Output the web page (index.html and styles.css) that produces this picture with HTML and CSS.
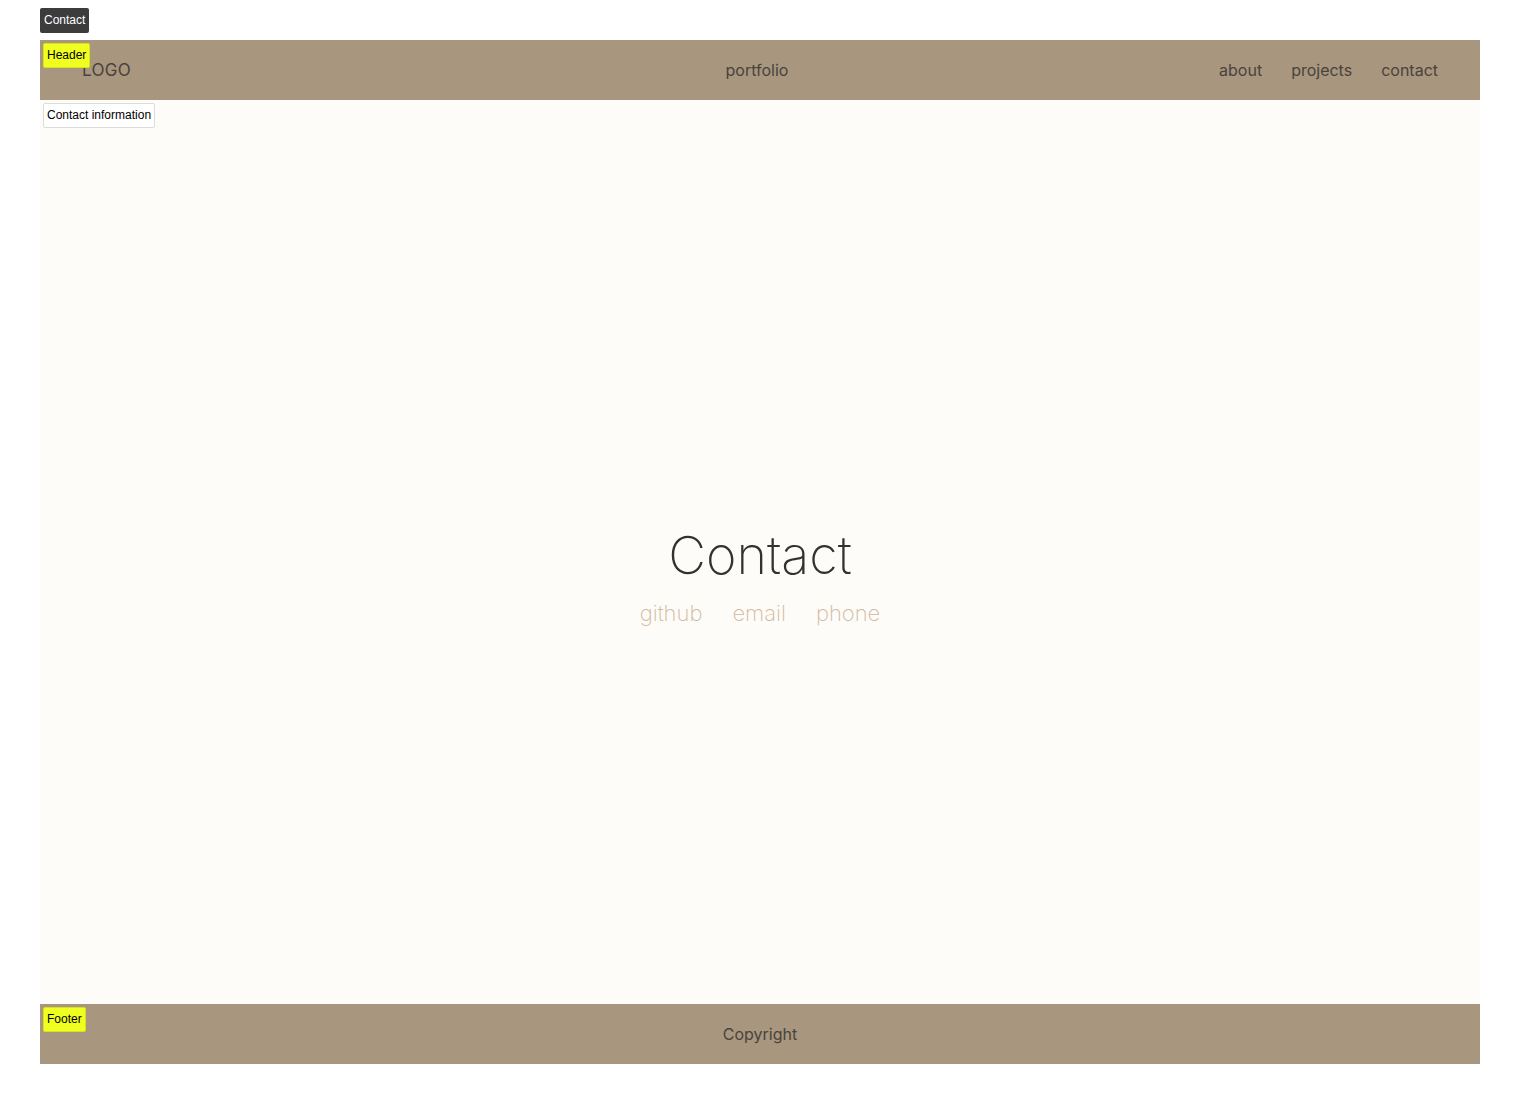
FILE: index.html
```html
<!DOCTYPE html>
<html lang="en">
<head>
<meta charset="utf-8">
<title>Contact</title>
<link rel="stylesheet" href="styles.css">
</head>
<body>
<div class="page">
  <div class="frame-tag">Contact</div>
  <div class="frame">
    <header class="header">
      <span class="tag tag-yellow tag-header">Header</span>
      <div class="logo">LOGO</div>
      <div class="brand">portfolio</div>
      <nav class="nav">
        <a href="#">about</a>
        <a href="#">projects</a>
        <a href="#">contact</a>
      </nav>
    </header>
    <main class="main">
      <span class="tag tag-white tag-info">Contact information</span>
      <div class="contact">
        <h1 class="title">Contact</h1>
        <div class="links">
          <a href="#">github</a>
          <a href="#">email</a>
          <a href="#">phone</a>
        </div>
      </div>
    </main>
    <footer class="footer">
      <span class="tag tag-yellow tag-footer">Footer</span>
      <div class="copyright">Copyright</div>
    </footer>
  </div>
</div>
</body>
</html>
```

FILE: styles.css
```css
* { box-sizing: border-box; }
html, body { margin: 0; padding: 0; background: #ffffff; }
body { font-family: Inter, "Noto Sans", sans-serif; }

.page { padding: 8px 40px 40px; }

.frame-tag {
  display: inline-block;
  height: 25px;
  line-height: 25px;
  padding: 0 4px;
  background: #3c3c3c;
  color: #ffffff;
  border-radius: 2px;
  font-family: "Liberation Sans", Arial, sans-serif;
  font-size: 12px;
}

.frame {
  margin-top: 7px;
  width: 1440px;
  display: flex;
  flex-direction: column;
}

.tag {
  position: absolute;
  left: 3px;
  top: 3px;
  height: 25px;
  line-height: 23px;
  padding: 0 3px;
  border-radius: 2px;
  font-family: "Liberation Sans", Arial, sans-serif;
  font-size: 12px;
  color: #000;
  white-space: nowrap;
}
.tag-yellow { background: #efff1f; border: 1px solid #d6e31a; }
.tag-white { background: #ffffff; border: 1px solid #dcdcdc; }

.header {
  position: relative;
  height: 60px;
  background: #a8967e;
  display: grid;
  grid-template-columns: 1fr auto 1fr;
  align-items: center;
  padding: 0 42px 0 42px;
  color: #48433d;
  font-size: 16px;
  font-weight: 400;
}
.logo { font-size: 17px; letter-spacing: 0.3px; justify-self: start; }
.brand { justify-self: center; margin-right: 6px; }
.nav { justify-self: end; display: flex; gap: 29px; }
.nav a { color: #48433d; text-decoration: none; }

.main {
  position: relative;
  height: 904px;
  background: #fdfcf9;
  display: flex;
  align-items: center;
  justify-content: center;
  padding-top: 48px;
}
.contact { display: flex; flex-direction: column; align-items: center; }
.title {
  margin: 0;
  font-size: 52px;
  font-weight: 200;
  line-height: 62px;
  color: #333230;
  letter-spacing: 0;
}
.links { display: flex; gap: 30px; margin-top: 11px; }
.links a {
  font-size: 22px;
  font-weight: 200;
  line-height: 30px;
  color: #d2b9a0;
  text-decoration: none;
}

.footer {
  position: relative;
  height: 60px;
  background: #a8967e;
  display: flex;
  align-items: center;
  justify-content: center;
  color: #48433d;
  font-size: 16px;
  font-weight: 400;
}
```
